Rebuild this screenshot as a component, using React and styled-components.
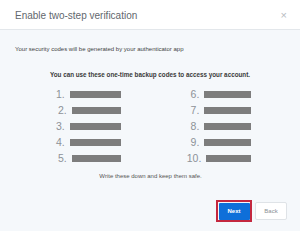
import React from 'react'
import styled, { createGlobalStyle } from 'styled-components'

const Global = createGlobalStyle`
  html, body { margin: 0; padding: 0; }
  body {
    width: 300px;
    height: 231px;
    overflow: hidden;
    background: #f5f8fb;
    font-family: "Liberation Sans", Arial, sans-serif;
  }
`

const codes = [
  { n: 1, w: 51 },
  { n: 2, w: 49 },
  { n: 3, w: 51 },
  { n: 4, w: 51 },
  { n: 5, w: 49 },
  { n: 6, w: 47 },
  { n: 7, w: 47 },
  { n: 8, w: 47 },
  { n: 9, w: 47 },
  { n: 10, w: 45 },
]

function App() {
  return (
    <>
      <Global />
      <Dialog>
        <Header>
          <Title>Enable two-step verification</Title>
          <Close>×</Close>
        </Header>
        <Body>
          <Intro>Your security codes will be generated by your authenticator app</Intro>
          <Lead>You can use these one-time backup codes to access your account.</Lead>
          <Codes>
            <Column>
              {codes.slice(0, 5).map(c => (
                <Code key={c.n}>
                  <Num>{c.n}.</Num>
                  <Redacted style={{ width: c.w }} />
                </Code>
              ))}
            </Column>
            <Column>
              {codes.slice(5).map(c => (
                <Code key={c.n}>
                  <Num>{c.n}.</Num>
                  <Redacted style={{ width: c.w }} />
                </Code>
              ))}
            </Column>
          </Codes>
          <Note>Write these down and keep them safe.</Note>
          <Actions>
            <Focus>
              <Primary>Next</Primary>
            </Focus>
            <Secondary>Back</Secondary>
          </Actions>
        </Body>
      </Dialog>
    </>
  )
}

export default App

const Dialog = styled.div`
  width: 300px;
  height: 231px;
  display: flex;
  flex-direction: column;
`
const Header = styled.div`
  height: 29px;
  background: #fff;
  border-bottom: 1px solid #e3e7eb;
  display: flex;
  align-items: center;
  justify-content: space-between;
  padding: 0 13px 0 15px;
`
const Title = styled.div`
  font-size: 10px;
  color: #62676d;
  padding-top: 1px;
`
const Close = styled.div`
  font-size: 11px;
  color: #b7bcc1;
`
const Body = styled.div`
  flex: 1;
  background: #f5f8fb;
  display: flex;
  flex-direction: column;
  padding: 16px 13px 0 15px;
`
const Intro = styled.div`
  font-size: 6px;
  color: #444;
`
const Lead = styled.div`
  margin-top: 19px;
  font-size: 6.3px;
  font-weight: bold;
  color: #3a3a3a;
  text-align: center;
  padding-right: 2px;
`
const Codes = styled.div`
  margin-top: 8px;
  display: flex;
  padding-left: 41px;
  gap: 66px;
`
const Column = styled.div`
  display: flex;
  flex-direction: column;
  align-items: flex-end;
`
const Code = styled.div`
  height: 16px;
  display: flex;
  align-items: center;
  gap: 5px;
`
const Num = styled.span`
  font-size: 10.5px;
  color: #8d9298;
`
const Redacted = styled.span`
  height: 7px;
  background: #7d7d7d;
`
const Note = styled.div`
  margin-top: 7px;
  font-size: 6px;
  color: #555;
  text-align: center;
  padding-right: 1px;
`
const Actions = styled.div`
  margin-top: 21px;
  display: flex;
  justify-content: flex-end;
  align-items: center;
  gap: 3px;
`
const Focus = styled.div`
  border: 2px solid #c4283f;
  padding: 0.5px;
  display: flex;
`
const Primary = styled.button`
  width: 31px;
  height: 17px;
  border: none;
  border-radius: 1px;
  background: #0e6fd9;
  color: #fff;
  font-family: inherit;
  font-size: 6px;
  font-weight: bold;
  padding: 0;
`
const Secondary = styled.button`
  width: 32px;
  height: 18px;
  border: 1px solid #dfe3e7;
  border-radius: 2px;
  background: #fff;
  color: #8a8f94;
  font-family: inherit;
  font-size: 6px;
  padding: 0;
`
